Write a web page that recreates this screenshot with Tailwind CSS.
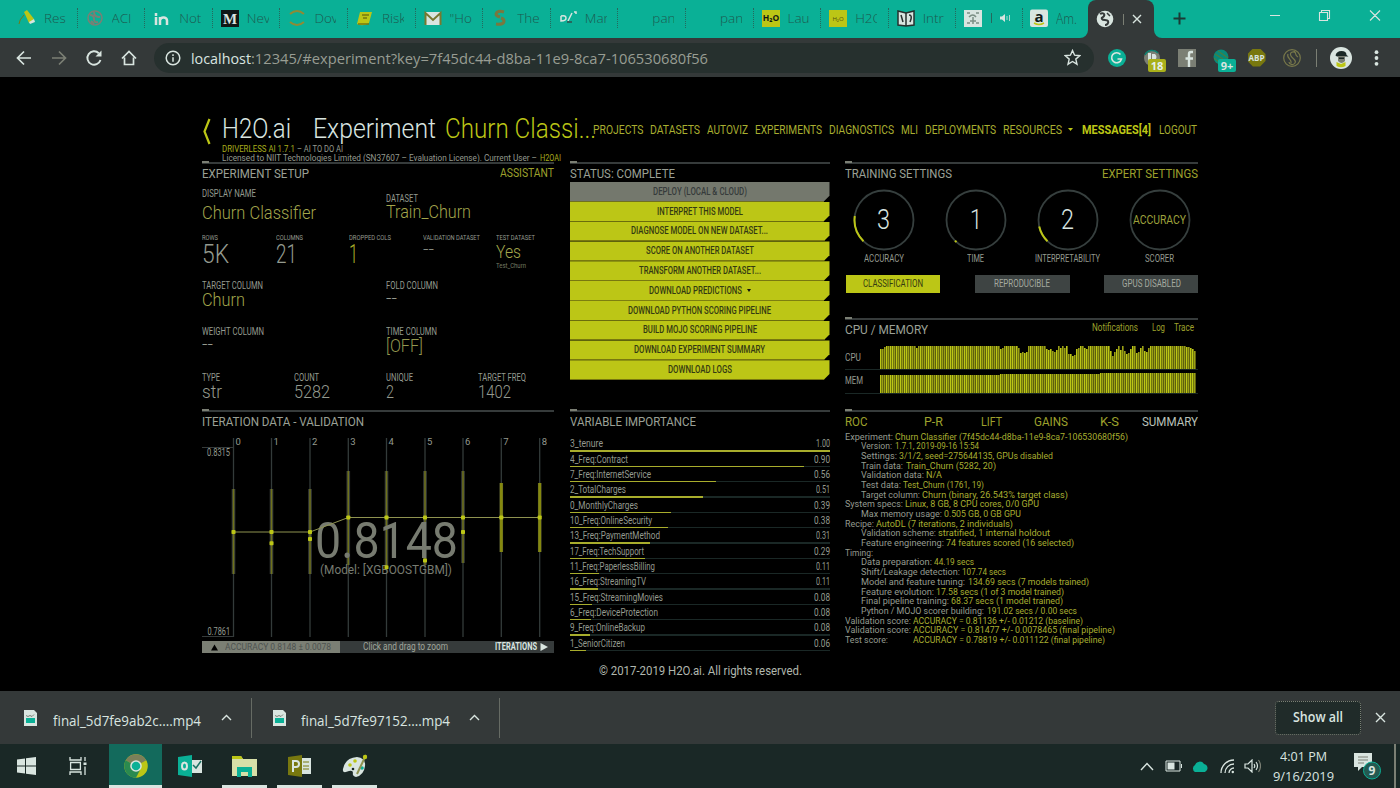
<!DOCTYPE html>
<html lang="en">
<head>
<meta charset="utf-8">
<title>H2O.ai Driverless AI</title>
<script src="https://cdn.jsdelivr.net/npm/@tailwindcss/browser@4"></script>
</head>
<body class="w-[1400px] h-[788px] overflow-hidden bg-black font-['Roboto',sans-serif] text-[#949a8f] flex flex-col">

<!-- tab strip -->
<header class="h-[38px] shrink-0 bg-[#0ab096] flex items-start font-['Open_Sans',sans-serif] text-[14px] text-[#26685d]">
  <div id="tabs" class="flex h-[36px] items-center pl-[10px] shrink-0"></div>
  <div class="relative w-[66px] ml-[9px] h-[38px] shrink-0 bg-[#343939] rounded-t-[8px] flex items-center pl-[8px]">
    <svg class="absolute -left-[8px] bottom-0" width="8" height="8"><path d="M8 0V8H0A8 8 0 0 0 8 0Z" fill="#343939"/></svg>
    <svg class="absolute -right-[8px] bottom-0" width="8" height="8"><path d="M0 0V8H8A8 8 0 0 1 0 0Z" fill="#343939"/></svg>
    <svg width="18" height="18" viewBox="0 0 18 18"><circle cx="9" cy="9" r="8.3" fill="#d9e5e0"/><path d="M4 4c3-2 5 0 4 2s-3 1-2 3 5 0 6 2-1 4-3 4" fill="none" stroke="#343939" stroke-width="2"/><path d="M11 3l3 3" stroke="#343939" stroke-width="1.5"/></svg>
    <i class="w-px h-[11px] bg-[#7b7f74] ml-[9px]"></i>
    <svg class="ml-[8px]" width="10" height="10" viewBox="0 0 10 10"><path d="M1 1l8 8M9 1l-8 8" stroke="#d9e5e0" stroke-width="1.4"/></svg>
  </div>
  <svg class="ml-[19px] mt-[12px] shrink-0" width="13" height="13" viewBox="0 0 13 13"><path d="M6.500 0.500v12M0.500 6.500h12" stroke="#1a3a35" stroke-width="2"/></svg>
  <svg class="ml-auto mr-[19px] mt-[9px] shrink-0" width="112" height="14" viewBox="0 0 112 14" fill="none" stroke="#d9e5e0" stroke-width="1.1"><path d="M1 6.500h10M50.500 3.500h8v8h-8zM52.500 3v-1.500h8v8H59M101 1.500l10 10M111 1.500l-10 10"/></svg>
</header>

<!-- address bar -->
<div class="h-[39px] shrink-0 bg-[#343939] flex items-center pl-[6px] font-['Open_Sans',sans-serif]">
  <div class="flex w-[140px] shrink-0">
    <div class="w-[35px] flex justify-center"><svg width="18" height="18" viewBox="0 0 18 18" fill="none" stroke="#d9e5e0" stroke-width="1.7"><path d="M16 9H3M9 2.500L2.500 9l6.500 6.500"/></svg></div>
    <div class="w-[35px] flex justify-center"><svg width="18" height="18" viewBox="0 0 18 18" fill="none" stroke="#7b7f74" stroke-width="1.7"><path d="M2 9h13M9 2.500L15.500 9 9 15.500"/></svg></div>
    <div class="w-[35px] flex justify-center"><svg width="18" height="18" viewBox="0 0 18 18" fill="none" stroke="#d9e5e0" stroke-width="1.9"><path d="M15.500 11A6.700 6.700 0 1 1 13.800 4.200"/><path d="M16.500 1.500v6h-6z" fill="#d9e5e0" stroke="none"/></svg></div>
    <div class="w-[35px] flex justify-center"><svg width="18" height="18" viewBox="0 0 18 18" fill="none" stroke="#d9e5e0" stroke-width="1.7"><path d="M2 9.500L9 2.500l7 7M4.500 8.500v7h9v-7"/></svg></div>
  </div>
  <div class="ml-[8px] w-[940px] h-[30px] rounded-full bg-[#26302e] flex items-center pl-[11px] pr-[13px] shrink-0">
    <svg width="16" height="16" viewBox="0 0 16 16" fill="none" stroke="#d9e5e0" stroke-width="1.5"><circle cx="8" cy="8" r="6.800"/><path d="M8 7.200v4.500M8 4.200v1.700"/></svg>
    <div class="ml-[10px] text-[15px] leading-[20px] whitespace-nowrap"><span data-w="60" class="text-[#d9e5e0]">localhost</span><span data-w="457" class="text-[#989d93]">:12345/#experiment?key=7f45dc44-d8ba-11e9-8ca7-106530680f56</span></div>
    <svg class="ml-auto" width="17" height="17" viewBox="0 0 17 17" fill="none" stroke="#d9e5e0" stroke-width="1.4"><path d="M8.500 1.500l2.100 4.700 5.100.5-3.900 3.400 1.200 5.100-4.500-2.700-4.500 2.700 1.200-5.100L1.300 6.700l5.100-.5z"/></svg>
  </div>
  <div class="ml-[5px] flex items-center">
    <div class="w-[35px] flex justify-center"><svg width="18" height="18" viewBox="0 0 18 18"><circle cx="9" cy="9" r="9" fill="#0ab096"/><path d="M12.500 5.500A5 5 0 1 0 13.500 10H9.500" fill="none" stroke="#d9e5e0" stroke-width="1.600"/></svg></div>
    <div class="w-[35px] flex justify-center relative"><svg width="18" height="18" viewBox="0 0 18 18"><circle cx="9" cy="9" r="8" fill="#7b7f74"/><path d="M2 6A8 8 0 0 1 15 4" stroke="#0a8070" fill="none" stroke-width="1.500"/><path d="M5 4h3v9H5zM9 5h3q3 3 0 6H9z" fill="#d9e5e0"/></svg>
      <b class="absolute left-[14px] top-[10px] w-[18px] h-[13px] bg-[#a9b01a] rounded-[2px] text-[#e6efea] text-[11px] leading-[13px] text-center">18</b></div>
    <div class="w-[35px] flex justify-center"><svg width="18" height="18" viewBox="0 0 18 18"><path d="M0 0h18v18H0z" fill="#7b7f74"/><path d="M15 3h-2q-2 0-2 2v13M7.500 9.500H15" fill="none" stroke="#d9e5e0" stroke-width="2.400"/></svg></div>
    <div class="w-[35px] flex justify-center relative"><svg width="18" height="18" viewBox="0 0 18 18"><circle cx="8" cy="8" r="7.500" fill="#0a8a78"/><path d="M2 5l11 7M5 2l10 7M1 9l6 5" stroke="#5f7a2c"/></svg>
      <b class="absolute left-[14px] top-[10px] w-[18px] h-[13px] bg-[#0ab096] rounded-[2px] text-[#d9e5e0] text-[11px] leading-[13px] text-center">9+</b></div>
    <div class="w-[35px] flex justify-center"><b class="size-[18px] bg-[#78780f] text-[#d9e5e0] text-[8px] leading-[18px] text-center [clip-path:polygon(30%_0,70%_0,100%_30%,100%_70%,70%_100%,30%_100%,0_70%,0_30%)]">ABP</b></div>
    <div class="w-[35px] flex justify-center"><svg width="18" height="18" viewBox="0 0 18 18" fill="none" stroke="#78784a" stroke-width="1.200"><circle cx="9" cy="9" r="8.300"/><path d="M13 4C10 1.500 6 3.500 8 7s6 4 4 7-6 1-6-1M5 5c-2 4 4 5 3 9M11 2c3 2 0 4 4 6"/></svg></div>
    <i class="w-px h-[18px] bg-[#7b7f74] ml-[7px]"></i>
    <svg class="ml-[13px]" width="22" height="22" viewBox="0 0 22 22"><circle cx="11" cy="11" r="11" fill="#d9e5e0"/><path d="M5.500 8.500q1-4.500 6-4.500t5 4l2 1.500H7z" fill="#1a2826"/><path d="M8 9h7v5q-3.500 4-7 0z" fill="#7b7f74"/><path d="M6.500 15l4.500 2 4.500-2v4q-4.500 2.500-9 0z" fill="#bcc616"/><path d="M9 10.500h5v1.500H9z" fill="#1a2826"/></svg>
    <svg class="ml-[22px]" width="5" height="16" viewBox="0 0 5 16" fill="#d9e5e0"><circle cx="2.500" cy="2.200" r="1.900"/><circle cx="2.500" cy="8" r="1.900"/><circle cx="2.500" cy="13.800" r="1.900"/></svg>
  </div>
</div>

<!-- application -->
<main class="h-[614px] shrink-0 bg-black pl-[202px] pr-[202px] flex flex-col">
  <div class="h-[85px] shrink-0 flex items-start">
    <svg class="mt-[41px] shrink-0" width="9" height="27" viewBox="0 0 9 27" fill="none" stroke="#bcc616" stroke-width="2.200"><path d="M7.500 1L2.500 13.500l5 12.500"/></svg>
    <div class="ml-[10.500px] mt-[37px] w-[371px] shrink-0">
      <div class="h-[30px] leading-[30px] text-[27px] font-light text-[#d9e5e0] whitespace-nowrap flex"><span data-w="69">H2O.ai</span><span data-w="123" class="ml-[22px]">Experiment</span><span data-w="151" class="ml-[9px] text-[#bcc616]">Churn Classi...</span></div>
      <div class="h-[9px] leading-[9px] text-[9.500px] whitespace-nowrap flex"><span data-w="73" class="text-[#a8ad1c]">DRIVERLESS AI 1.7.1</span><span data-w="46" class="ml-[2px]">– AI TO DO AI</span></div>
      <div class="h-[9px] leading-[9px] text-[9.500px] whitespace-nowrap flex"><span data-w="315">Licensed to NIIT Technologies Limited (SN37607 – Evaluation License). Current User –</span><span data-w="21" class="ml-[3px] text-[#a8ad1c]">H2OAI</span></div>
    </div>
    <nav class="mt-[44px] h-[18px] leading-[18px] text-[12px] text-[#a8ae30] flex gap-[7px] whitespace-nowrap">
      <span data-w="50.500">PROJECTS</span><span data-w="50">DATASETS</span><span data-w="41">AUTOVIZ</span><span data-w="67">EXPERIMENTS</span><span data-w="65">DIAGNOSTICS</span><span data-w="17">MLI</span><span data-w="71">DEPLOYMENTS</span><span data-w="59">RESOURCES</span><svg class="mt-[7px] -ml-[1px]" width="5" height="3"><path d="M0 0h5L2.500 3z" fill="#bcc616"/></svg><b data-w="69" class="ml-[2px] text-[#bcc616]">MESSAGES[4]</b><span data-w="38" class="ml-[1px]">LOGOUT</span>
    </nav>
  </div>

  <div class="flex gap-[15.500px] h-[499px] shrink-0">
    <!-- left column -->
    <section class="w-[352px] shrink-0 flex flex-col whitespace-nowrap">
      <div class="h-[2px] shrink-0 bg-[#363b3b] relative"><i class="absolute left-0 -top-[1px] w-[7px] h-[2px] bg-[#7b7f74]"></i></div>
      <div class="h-[20px] shrink-0 leading-[19px] text-[13.500px] flex justify-between text-[#9ba096]"><span data-w="107">EXPERIMENT SETUP</span><span data-w="54" class="text-[12px] text-[#9da02c]">ASSISTANT</span></div>
      <div class="h-[50px] shrink-0 flex">
        <div class="w-[184px] pt-[5px]"><div class="h-[10px] leading-[10px] text-[10px]"><span data-w="54">DISPLAY NAME</span></div><div class="h-[28px] leading-[28px] text-[17.500px] font-light text-[#a3a64c]"><span data-w="114">Churn Classifier</span></div></div>
        <div class="pt-[10px]"><div class="h-[10px] leading-[10px] text-[10px]"><span data-w="32">DATASET</span></div><div class="h-[17px] leading-[17px] text-[17.500px] font-light text-[#a3a64c]"><span data-w="85">Train_Churn</span></div></div>
      </div>
      <div class="h-[46px] shrink-0 grid grid-cols-[73.600px_73.600px_73.600px_73.600px_1fr] text-[25px] font-light leading-[24px]">
        <div><div class="h-[9px] leading-[9px] text-[7px] font-normal"><span data-w="16">ROWS</span></div><div class="h-[24px]"><span data-w="27">5K</span></div></div>
        <div><div class="h-[9px] leading-[9px] text-[7px] font-normal"><span data-w="27">COLUMNS</span></div><div class="h-[24px]"><span data-w="21">21</span></div></div>
        <div><div class="h-[9px] leading-[9px] text-[7px] font-normal"><span data-w="42">DROPPED COLS</span></div><div class="h-[24px]"><span data-w="9" class="text-[#a8ad28]">1</span></div></div>
        <div><div class="h-[9px] leading-[9px] text-[7px] font-normal"><span data-w="57">VALIDATION DATASET</span></div><div class="h-[14px] leading-[14px] text-[16px]"><span data-w="11">--</span></div></div>
        <div><div class="h-[9px] leading-[9px] text-[7px] font-normal"><span data-w="39">TEST DATASET</span></div><div class="h-[18px] leading-[18px] text-[18px] text-[#a3a64c]"><span data-w="25">Yes</span></div><div class="h-[11px] leading-[11px] text-[7px] font-normal text-[#757a62]"><span data-w="30">Test_Churn</span></div></div>
      </div>
      <div class="h-[46px] shrink-0 grid grid-cols-[184px_1fr] text-[17.500px] font-light leading-[19px] pt-[1px]">
        <div><div class="h-[10px] leading-[10px] text-[10px] font-normal"><span data-w="61">TARGET COLUMN</span></div><span data-w="43" class="text-[#a3a64c]">Churn</span></div>
        <div><div class="h-[10px] leading-[10px] text-[10px] font-normal"><span data-w="52">FOLD COLUMN</span></div><div class="h-[15px] leading-[15px]"><span data-w="11">--</span></div></div>
      </div>
      <div class="h-[46px] shrink-0 grid grid-cols-[184px_1fr] text-[17.500px] font-light leading-[19px] pt-[1px]">
        <div><div class="h-[10px] leading-[10px] text-[10px] font-normal"><span data-w="62">WEIGHT COLUMN</span></div><div class="h-[15px] leading-[15px]"><span data-w="11">--</span></div></div>
        <div><div class="h-[10px] leading-[10px] text-[10px] font-normal"><span data-w="51">TIME COLUMN</span></div><span data-w="37" class="text-[#93974f]">[OFF]</span></div>
      </div>
      <div class="h-[38px] shrink-0 grid grid-cols-[92px_92px_92px_1fr] text-[17.500px] font-light leading-[19px] pt-[1px]">
        <div><div class="h-[10px] leading-[10px] text-[10px] font-normal"><span data-w="18">TYPE</span></div><span data-w="20">str</span></div>
        <div><div class="h-[10px] leading-[10px] text-[10px] font-normal"><span data-w="25">COUNT</span></div><span data-w="36">5282</span></div>
        <div><div class="h-[10px] leading-[10px] text-[10px] font-normal"><span data-w="27">UNIQUE</span></div><span data-w="8">2</span></div>
        <div><div class="h-[10px] leading-[10px] text-[10px] font-normal"><span data-w="48">TARGET FREQ</span></div><span data-w="33">1402</span></div>
      </div>
      <div class="h-[2px] shrink-0 bg-[#363b3b] relative"><i class="absolute left-0 -top-[1px] w-[7px] h-[2px] bg-[#7b7f74]"></i></div>
      <div class="h-[19px] shrink-0 leading-[19px] text-[13.500px] text-[#9ba096]"><span data-w="162">ITERATION DATA - VALIDATION</span></div>
      <svg id="chart" class="shrink-0" width="352" height="210" viewBox="202 431 352 210" fill="#949a8f" font-size="10"></svg>
      <div class="h-[12px] shrink-0 bg-[#363b3b] text-[10px] leading-[12px] flex text-[#a0a59a]">
        <div class="w-[138px] bg-[#7b7f74] text-[#4d5250] flex items-center"><svg class="ml-[9px]" width="7" height="7"><path d="M0 6.500L3.500 0.500 7 6.500z" fill="#000"/></svg><span data-w="106" class="ml-[7px] text-[9px]">ACCURACY 0.8148 ± 0.0078</span></div>
        <span data-w="85" class="ml-[23px]">Click and drag to zoom</span>
        <b data-w="42" class="ml-[47px] text-[#d9e5e0]">ITERATIONS</b>
        <svg class="ml-[3px] mt-[2px]" width="8" height="8"><path d="M0.500 0L8 4 0.500 8z" fill="#d9e5e0"/></svg>
      </div>
    </section>

    <!-- middle column -->
    <section class="w-[260px] shrink-0 flex flex-col whitespace-nowrap">
      <div class="h-[2px] shrink-0 bg-[#363b3b] relative"><i class="absolute left-0 -top-[1px] w-[7px] h-[2px] bg-[#7b7f74]"></i></div>
      <div class="h-[18px] shrink-0 leading-[19px] text-[13.500px] text-[#9ba096]"><span data-w="105">STATUS: COMPLETE</span></div>
      <div id="actions" class="h-[198px] shrink-0 grid grid-rows-10 text-[10px] font-medium text-[#343a12]"></div>
      <div class="h-[2px] mt-[30px] shrink-0 bg-[#363b3b] relative"><i class="absolute left-0 -top-[1px] w-[7px] h-[2px] bg-[#7b7f74]"></i></div>
      <div class="h-[24.500px] shrink-0 leading-[19px] text-[13.500px] text-[#9ba096]"><span data-w="126">VARIABLE IMPORTANCE</span></div>
      <div id="vars" class="shrink-0 text-[10px]"></div>
    </section>

    <!-- right column -->
    <section class="w-[353px] shrink-0 flex flex-col whitespace-nowrap">
      <div class="h-[2px] shrink-0 bg-[#363b3b] relative"><i class="absolute left-0 -top-[1px] w-[7px] h-[2px] bg-[#7b7f74]"></i></div>
      <div class="h-[20px] shrink-0 leading-[19px] text-[13.500px] flex justify-between text-[#9ba096]"><span data-w="107">TRAINING SETTINGS</span><span data-w="96" class="text-[#9da02c]">EXPERT SETTINGS</span></div>
      <div class="h-[91px] shrink-0 pt-[5px] -mx-[7.500px] grid grid-cols-4 text-[10px]">
        <div class="flex flex-col items-center"><div class="size-[62px] grid place-items-center"><svg class="col-start-1 row-start-1" width="62" height="62" viewBox="-31 -31 62 62" fill="none"><circle r="29.500" stroke="#363f3e" stroke-width="1.800"/><path d="M-20.500 21.200A29.500 29.500 0 0 1 -29.200 -4" stroke="#bcc616" stroke-width="2"/></svg><span data-w="13" class="col-start-1 row-start-1 text-[27px] font-light text-[#d9e5e0]">3</span></div><span data-w="40" class="leading-[16px]">ACCURACY</span></div>
        <div class="flex flex-col items-center"><div class="size-[62px] grid place-items-center"><svg class="col-start-1 row-start-1" width="62" height="62" viewBox="-31 -31 62 62" fill="none"><circle r="29.500" stroke="#363f3e" stroke-width="1.800"/><path d="M-19.500 22.100L-21 20.700" stroke="#bcc616" stroke-width="2"/></svg><span data-w="12" class="col-start-1 row-start-1 text-[27px] font-light text-[#d9e5e0]">1</span></div><span data-w="17" class="leading-[16px]">TIME</span></div>
        <div class="flex flex-col items-center"><div class="size-[62px] grid place-items-center"><svg class="col-start-1 row-start-1" width="62" height="62" viewBox="-31 -31 62 62" fill="none"><circle r="29.500" stroke="#363f3e" stroke-width="1.800"/><path d="M-20.500 21.200A29.500 29.500 0 0 1 -28.800 6.500" stroke="#bcc616" stroke-width="2"/></svg><span data-w="13" class="col-start-1 row-start-1 text-[27px] font-light text-[#d9e5e0]">2</span></div><span data-w="65" class="leading-[16px]">INTERPRETABILITY</span></div>
        <div class="flex flex-col items-center"><div class="size-[62px] grid place-items-center"><svg class="col-start-1 row-start-1" width="62" height="62" viewBox="-31 -31 62 62" fill="none"><circle r="29.500" stroke="#363f3e" stroke-width="1.800"/></svg><span data-w="53" class="col-start-1 row-start-1 text-[12px] text-[#9da03c]">ACCURACY</span></div><span data-w="29" class="leading-[16px]">SCORER</span></div>
      </div>
      <div class="h-[18px] shrink-0 flex justify-between text-[10px] leading-[18px] text-center">
        <div class="w-[94px] ml-[1px] bg-[#bcc616] text-[#343a12]"><span data-w="60">CLASSIFICATION</span></div>
        <div class="w-[95px] bg-[#3e4443] text-[#a4a99f]"><span data-w="56">REPRODUCIBLE</span></div>
        <div class="w-[94px] bg-[#3e4443] text-[#a4a99f]"><span data-w="59">GPUS DISABLED</span></div>
      </div>
      <div class="h-[2px] mt-[25px] shrink-0 bg-[#363b3b] relative"><i class="absolute left-0 -top-[1px] w-[7px] h-[2px] bg-[#7b7f74]"></i></div>
      <div class="h-[26px] shrink-0 leading-[19px] text-[13.500px] flex text-[#9ba096]"><span data-w="83">CPU / MEMORY</span><div class="ml-auto mr-[4px] flex text-[10px] leading-[16px] text-[#9da02c]"><span data-w="46">Notifications</span><span data-w="13" class="ml-[14px]">Log</span><span data-w="20" class="ml-[9px]">Trace</span></div></div>
      <div class="h-[24px] shrink-0 flex text-[10px] leading-[24px] border-b border-[#1a2826]"><span data-w="16">CPU</span><svg id="cpu" class="ml-auto mr-[1px]" width="317" height="23"></svg></div>
      <div class="h-[24px] shrink-0 flex text-[10px] leading-[22px] border-b border-[#1a2826]"><span data-w="18">MEM</span><svg id="mem" class="ml-auto mr-[1px] mt-[3px]" width="317" height="20"></svg></div>
      <div class="h-[2px] mt-[16px] shrink-0 bg-[#363b3b] relative"><i class="absolute left-0 -top-[1px] w-[7px] h-[2px] bg-[#7b7f74]"></i></div>
      <div class="h-[19.500px] shrink-0 leading-[19px] text-[13.500px] flex text-[#9da02c]"><span data-w="22.500">ROC</span><span data-w="19" class="ml-[56.500px]">P-R</span><span data-w="21" class="ml-[38px]">LIFT</span><span data-w="34" class="ml-[32px]">GAINS</span><span data-w="19" class="ml-[32px]">K-S</span><span data-w="56" class="ml-[22.500px] text-[#b9c1b9]">SUMMARY</span></div>
      <div id="summary" class="shrink-0 text-[9.800px]"></div>
    </section>
  </div>
  <footer class="h-[20px] leading-[20px] text-[12px] text-center text-[#b0b7ae]"><span data-w="203">© 2017-2019 H2O.ai. All rights reserved.</span></footer>
</main>

<!-- downloads shelf -->
<div class="h-[53px] shrink-0 bg-[#343939] flex items-center font-['Open_Sans',sans-serif] text-[14px] text-[#d9e5e0]">
  <div class="w-[252px] h-[40px] flex items-center border-r border-[#666b64] pl-[24px]">
    <svg width="13" height="16" viewBox="0 0 13 16"><path d="M0 0h10l3 3v13H0z" fill="#d9e5e0"/><path d="M2 8h9v5H2z" fill="#0ab096"/><path d="M2 5.500l2 1 2-1 2 1 2-2" stroke="#7b7f74" fill="none"/></svg>
    <span data-w="148" class="ml-[16px] mt-[6px]">final_5d7fe9ab2c....mp4</span>
    <svg class="ml-[20px]" width="11" height="7"><path d="M1 6l4.500-4.500L10 6" fill="none" stroke="#d9e5e0" stroke-width="1.400"/></svg>
  </div>
  <div class="w-[248px] h-[40px] flex items-center border-r border-[#666b64] pl-[21px]">
    <svg width="13" height="16" viewBox="0 0 13 16"><path d="M0 0h10l3 3v13H0z" fill="#d9e5e0"/><path d="M2 8h9v5H2z" fill="#0ab096"/><path d="M2 5.500l2 1 2-1 2 1 2-2" stroke="#7b7f74" fill="none"/></svg>
    <span data-w="149" class="ml-[15px] mt-[6px]">final_5d7fe97152....mp4</span>
    <svg class="ml-[19px]" width="11" height="7"><path d="M1 6l4.500-4.500L10 6" fill="none" stroke="#d9e5e0" stroke-width="1.400"/></svg>
  </div>
  <div class="ml-auto w-[86px] h-[34px] rounded-[4px] border border-dotted border-[#7b7f74] bg-[#202b29] text-center leading-[31px] font-semibold text-[13.500px]"><span data-w="50">Show all</span></div>
  <svg class="ml-[14px] mr-[14px]" width="11" height="11"><path d="M1 1l9 9M10 1l-9 9" stroke="#d9e5e0" stroke-width="1.400"/></svg>
</div>

<!-- taskbar -->
<div class="h-[44px] shrink-0 bg-[#1a2826] flex font-['Open_Sans',sans-serif] text-[#d9e5e0]">
  <div class="w-[52px] flex items-center justify-center"><svg width="19" height="18" viewBox="0 0 19 18" fill="#d9e5e0"><path d="M0 2.500L8 1.400v7.100H0zM9 1.200L19 0v8.500H9zM0 9.500h8v7.100L0 15.500zM9 9.500h10V18L9 16.800z"/></svg></div>
  <div class="w-[57px] flex items-center pl-[17px]"><svg width="19" height="18" viewBox="0 0 19 18" fill="none" stroke="#d9e5e0" stroke-width="1.300"><path d="M1 0v3h11V0M1 18v-3h11v3M1.600 5.500h9.800v7H1.600zM16 0v4M16 9.500V18"/><path d="M14.500 5.500h3v2.500h-3z" fill="#d9e5e0" stroke="none"/></svg></div>
  <div class="w-[53px] bg-[#136a5c] border-b-[3px] border-[#d9e5e0] flex items-center justify-center pt-[3px]"><svg width="24" height="24" viewBox="-12 -12 24 24"><circle r="11.800" fill="#bcc616"/><path d="M0 0L-10.300 -5.800A11.800 11.800 0 0 1 10.300 -5.800Z" fill="#7b7f5a"/><path d="M0 0L-10.300 -5.800A11.800 11.800 0 0 0 0 11.800L4 4z" fill="#2a8a50"/><circle r="5.800" fill="#d9e5e0"/><circle r="4.300" fill="#0ab096"/></svg></div>
  <div class="w-[55px] flex items-center justify-center"><svg width="24" height="22" viewBox="0 0 24 22"><path d="M0 2L14 0v22L0 20z" fill="#0ab096"/><path d="M14 5h10v13H14z" fill="#d9e5e0"/><path d="M15 10l3 3 5-7" fill="none" stroke="#1a7264" stroke-width="1.500"/><ellipse cx="6.500" cy="11" rx="2.500" ry="3.500" fill="none" stroke="#d9e5e0" stroke-width="2"/></svg></div>
  <div class="w-[55px] flex items-center justify-center relative"><svg width="25" height="22" viewBox="0 0 25 22"><path d="M0 1h9l2 3h14v17H0z" fill="#d7dfa8"/><path d="M0 1h9l2 3H0z" fill="#bcc616"/><path d="M5 22V12h15v10h-4v-5H9v5z" fill="#0ab096"/></svg><i class="absolute bottom-0 left-[5px] w-[45px] h-[3px] bg-[#d9e5e0]"></i></div>
  <div class="w-[55px] flex items-center justify-center relative"><svg width="24" height="22" viewBox="0 0 24 22"><path d="M12 3h11v16H12z" fill="#d9e5e0"/><path d="M15 7h6M15 11h6M15 14h6" stroke="#78780f"/><path d="M0 2L14 0v22L0 20z" fill="#78780f"/><path d="M5 17V6h3q3 0 3 3t-3 3H5" fill="none" stroke="#d9e5e0" stroke-width="2"/></svg><i class="absolute bottom-0 left-[5px] w-[45px] h-[3px] bg-[#d9e5e0]"></i></div>
  <div class="w-[55px] flex items-center justify-center relative"><svg width="26" height="24" viewBox="0 0 26 24"><path d="M1 15Q3 4 15 3q9 1 8 9-1 9-9 11-4-1-3-4 0-3-4-2-7 3-6-2z" fill="#d9e5e0"/><circle cx="8" cy="11" r="1.800" fill="#bcc616"/><circle cx="13" cy="7" r="1.800" fill="#bcc616"/><circle cx="20" cy="14" r="1.800" fill="#0ab096"/><circle cx="11" cy="15" r="1.300" fill="#1a2826"/><path d="M24 1L15 20" stroke="#8f9350" stroke-width="2"/><circle cx="23" cy="3" r="2.200" fill="#bcc616"/></svg><i class="absolute bottom-0 left-[5px] w-[45px] h-[3px] bg-[#d9e5e0]"></i></div>
  <div class="ml-auto flex items-center">
    <svg width="14" height="9"><path d="M1 8l6-6.500L13 8" fill="none" stroke="#d9e5e0" stroke-width="1.400"/></svg>
    <svg class="ml-[11px]" width="18" height="12" fill="none" stroke="#d9e5e0"><path d="M1 1h14v10H1zM16.500 4v4"/><path d="M2.500 2.500h7v7h-7z" fill="#d9e5e0" stroke="none"/></svg>
    <svg class="ml-[8px]" width="18" height="12"><path d="M4 12a4 4 0 0 1 0-7 5 5 0 0 1 9-1 4.200 4.200 0 0 1 1 8z" fill="#0ab096"/></svg>
    <svg class="ml-[11px]" width="15" height="15" fill="none" stroke="#d9e5e0" stroke-width="1.300"><path d="M1 14A13 13 0 0 1 14 1M5 14a9 9 0 0 1 9-9M9 14a5 5 0 0 1 5-5"/><circle cx="12.800" cy="13" r="1.200" fill="#d9e5e0" stroke="none"/></svg>
    <svg class="ml-[9px]" width="17" height="14" fill="none" stroke="#d9e5e0" stroke-width="1.200"><path d="M1 5h3l4-4v12L4 9H1zM10 5q1.500 2 0 4M12 3q3 4 0 8"/><path d="M14.500 1q4 6 0 12" stroke="#7b7f74"/></svg>
    <div class="ml-[11px] w-[62px] text-center text-[13.500px] leading-[20px]"><div><span data-w="47">4:01 PM</span></div><div><span data-w="61">9/16/2019</span></div></div>
    <svg class="ml-[20px]" width="28" height="28" viewBox="0 0 28 28"><path d="M0 1h18v14H8l-4 4v-4H0z" fill="#d9e5e0"/><path d="M4 5h10M4 8h10M4 11h6" stroke="#7b7f74"/><circle cx="18" cy="18.500" r="8.500" fill="#245a52" stroke="#0ab096"/><text x="18" y="23" font-size="12" font-weight="bold" text-anchor="middle" fill="#d9e5e0">9</text></svg>
    <i class="ml-[12px] w-[2px] h-[44px] bg-[#7b7f74] mr-[4px]"></i>
  </div>
</div>

<script>
const $ = id => document.getElementById(id);

// browser tabs: [icon markup, title]
const tabs = [
 ['<path d="M6 3l3-2 7 9-5 4z" fill="#bcc616"/><path d="M11 13l5-3 1 3-5 2z" fill="#d9e5e0"/><path d="M1 15q0-4 5-9" stroke="#78780f" fill="none"/>','Res'],
 ['<circle cx="9" cy="9" r="7" fill="none" stroke="#7b7f74" stroke-width="1.5"/><path d="M4 6q4 0 4 4t4 3M8 3q0 5 6 5M5 12l3 3" stroke="#7b7f74" stroke-width="2" fill="none"/>','ACI'],
 ['<path d="M3 4v3M3 8v8M7 8v8M7 11q1-3 4-2.500t3 3V16" stroke="#d9e5e0" stroke-width="2.500" fill="none"/>','Not'],
 ['<path d="M0 1h18v17H0z" fill="#101817"/><text x="9" y="14.500" text-anchor="middle" font-family="Liberation Serif" font-weight="bold" font-size="15" fill="#d9e5e0">M</text>','Nev'],
 ['<path d="M2 5q7-6 14 0M2 13q7 6 14 0" stroke="#8f8a35" stroke-width="2" fill="none"/>','Dov'],
 ['<path d="M4 3h12l-3 11q-6 4-12 1z" fill="#bcc616"/><path d="M6 6h7M7 9h4M2 15h11" stroke="#78780f" stroke-width="1.500"/>','Risk'],
 ['<path d="M1 3h16v13H1z" fill="#d9e5e0"/><path d="M1.500 16V4L9 11l7.500-7v12" stroke="#78782f" stroke-width="2" fill="none"/>','"Ho'],
 ['<path d="M13 3q-7-2-8 2 0 2 4 3M5 15q8 1 8-3 0-2-3-3" stroke="#78783f" stroke-width="3" fill="none"/>','The'],
 ['<path d="M2 7v5q5 0 5-3T2 7M9 12l4-8M15 3h2v2" stroke="#d9e5e0" stroke-width="1.500" fill="none"/><path d="M8 13h5" stroke="#26685d" stroke-width="2"/>','Mar'],
 ['','pan'],['','pan'],
 ['<path d="M0 1h18v17H0z" fill="#bcc616"/><text x="9" y="12" text-anchor="middle" font-weight="bold" font-size="8.500" fill="#101817">H₂O</text>','Lau'],
 ['<path d="M0 1h18v17H0z" fill="#bcc616"/><text x="9" y="12" text-anchor="middle" font-size="6" fill="#4d520f">H₂O</text>','H2O'],
 ['<path d="M1 2l8 2 8-2v14l-8 1-8-1z" fill="#d9e5e0" stroke="#26302e" stroke-width="1.500"/><path d="M9 4v13M4 6l2 7M12 6q4 0 1 7" stroke="#26302e" stroke-width="1.500" fill="none"/>','Intr'],
];
$('tabs').innerHTML = tabs.map(([i,t]) =>
  `<div class="w-[67.600px] h-[20px] shrink-0 flex items-center pl-[8px] gap-[8px] border-r border-dotted border-[#26685d]"><svg class="shrink-0" width="18" height="18" viewBox="0 0 18 18">${i}</svg><span class="w-[22px] overflow-hidden whitespace-nowrap shrink-0 leading-[20px] font-light text-[13.500px] text-[#1d5a50]">${t}</span></div>`).join('') +
  `<div class="w-[36px] h-[10px] shrink-0 flex items-center pl-[8px] border-r border-[#26685d]"><svg class="shrink-0" width="18" height="18"><path d="M0 1h18v17H0z" fill="#d9e5e0"/><path d="M3 4h3M12 4h3M3 14h3M12 14h3M5 8q4-4 7 0M9 8v7M6 12l6 0" stroke="#7b8f84" stroke-width="1.500" fill="none"/></svg></div>
   <div class="w-[31px] h-[20px] shrink-0 flex items-center pl-[8px] border-r border-dotted border-[#26685d]"><svg width="11" height="8"><path d="M0 2.500h2L5 0v8L2 5.500H0z" fill="#d9e5e0"/><path d="M7 2v4M9.500 1v6" stroke="#a9d9d0"/></svg></div>
   <div class="w-[56px] h-[20px] shrink-0 flex items-center pl-[7px] gap-[8px]"><svg class="shrink-0" width="18" height="18"><rect y="0.500" width="18" height="17.500" rx="2" fill="#d9e5e0"/><text x="9" y="12.500" text-anchor="middle" font-size="15" font-weight="bold" fill="#101817">a</text><path d="M4 14q5 3 10 0" stroke="#bcc616" stroke-width="1.500" fill="none"/></svg><span data-w="21" class="font-light text-[#1d5a50]">Am.</span></div>`;

// action buttons: [label, width]
const actions = [['DEPLOY (LOCAL &amp; CLOUD)',94],['INTERPRET THIS MODEL',86],['DIAGNOSE MODEL ON NEW DATASET...',137],['SCORE ON ANOTHER DATASET',108],['TRANSFORM ANOTHER DATASET...',122],['DOWNLOAD PREDICTIONS',93],['DOWNLOAD PYTHON SCORING PIPELINE',143],['BUILD MOJO SCORING PIPELINE',114],['DOWNLOAD EXPERIMENT SUMMARY',131],['DOWNLOAD LOGS',64]];
$('actions').innerHTML = actions.map(([t,w],i) =>
  `<div class="${i ? 'bg-[#bcc616]' : 'bg-[#74786d] text-[#363b3b]'} border-b border-[#78780f] flex items-center justify-center [clip-path:polygon(0_0,100%_0,100%_calc(100%-6px),calc(100%-6px)_100%,0_100%)]"><span data-w="${w}">${t}</span>${i===5?'<svg class="ml-[5px]" width="4" height="3"><path d="M0 0h4L2 3z" fill="#111"/></svg>':''}</div>`).join('');

// variable importance: [name, name width, value, bar length]
const vars = [['3_tenure',33,'1.00',260],['4_Freq:Contract',58,'0.90',234],['7_Freq:InternetService',81,'0.56',146],['2_TotalCharges',56,'0.51',133],['0_MonthlyCharges',68,'0.39',101],['10_Freq:OnlineSecurity',82,'0.38',98],['13_Freq:PaymentMethod',90,'0.31',80],['17_Freq:TechSupport',74,'0.29',75],['11_Freq:PaperlessBilling',85,'0.11',29],['16_Freq:StreamingTV',76,'0.11',28],['15_Freq:StreamingMovies',93,'0.08',22],['6_Freq:DeviceProtection',88,'0.08',21],['9_Freq:OnlineBackup',75,'0.08',20],['1_SeniorCitizen',55,'0.06',16]];
$('vars').innerHTML = vars.map(([n,w,v,b]) =>
  `<div class="h-[15.330px] flex flex-col justify-end"><div class="flex justify-between leading-[13px] h-[13px]"><span data-w="${w}">${n}</span><span data-w="${v.includes('1')?14:16}">${v}</span></div><div class="h-[1.500px] bg-[#1a2826]"><div class="h-[1.500px] bg-[#a8ad2c]" style="width:${b}px"></div></div></div>`).join('');

// run summary: [indent, label, label width, gap, value, value width]
const S = [[0,'Experiment:',48,2,'Churn Classifier (7f45dc44-d8ba-11e9-8ca7-106530680f56)',233],
[1,'Version:',31,3,'1.7.1, 2019-09-16 15:54',84],[1,'Settings:',36,2,'3/1/2, seed=275644135, GPUs disabled',154],
[1,'Train data:',42,3,'Train_Churn (5282, 20)',90],[1,'Validation data:',63,2,'N/A',16],[1,'Test data:',40,2,'Test_Churn (1761, 19)',81],
[1,'Target column:',59,2,'Churn (binary, 26.543% target class)',146],[0,'System specs:',58,2,'Linux, 8 GB, 8 CPU cores, 0/0 GPU',134],
[1,'Max memory usage:',81,2,'0.505 GB, 0 GB GPU',77],[0,'Recipe:',29,2,'AutoDL (7 iterations, 2 individuals)',137],
[1,'Validation scheme:',75,2,'stratified, 1 internal holdout',112],[1,'Feature engineering:',83,2,'74 features scored (16 selected)',128],
[0,'Timing:',28,0,'',0],[1,'Data preparation:',71,2,'44.19 secs',40],[1,'Shift/Leakage detection:',99,2,'107.74 secs',44],
[1,'Model and feature tuning:',104,3,'134.69 secs (7 models trained)',121],[1,'Feature evolution:',73,2,'17.58 secs (1 of 3 model trained)',128],
[1,'Final pipeline training:',88,2,'68.37 secs (1 model trained)',112],[1,'Python / MOJO scorer building:',123,3,'191.02 secs / 0.00 secs',90],
[0,'Validation score:',66,2,'ACCURACY = 0.81136 +/- 0.01212 (baseline)',170],[0,'Validation score:',66,2,'ACCURACY = 0.81477 +/- 0.0078465 (final pipeline)',202],
[0,'Test score:',43,25,'ACCURACY = 0.78819 +/- 0.011122 (final pipeline)',192]];
$('summary').innerHTML = S.map(([i,l,lw,g,v,vw]) =>
  `<div class="h-[9.690px] leading-[9.690px] flex ${i?'pl-[16px]':''}"><span data-w="${lw}">${l}</span>${v?`<span class="text-[#a8ae30]" style="margin-left:${g}px" data-w="${vw}">${v}</span>`:''}</div>`).join('');

// CPU and memory history
const dips = {0:3,1:3,2:1,18:2,60:3,61:2,69:2,70:7,71:6,72:7,73:6,83:3,84:4,85:3,86:5,87:6,88:4,90:2,92:2,94:8,95:8,96:10,97:9,98:3,99:2,102:2,103:3,115:5,116:10,117:6,118:3,120:4,122:5,123:8,124:7,125:3,128:7,129:6,130:2,132:5,133:6,134:2,153:1,154:1,155:2,156:3,157:5};
const shade = i => (i*7%5<2||i%6===0) ? '#bcc616' : '#9a9f14';
const bars = (h, top) => Array.from({length:158},(_,i)=>`<rect x="${i*2}" y="${top(i)}" width="1.600" height="${h-top(i)}" fill="${shade(i)}"/>`).join('');
$('cpu').innerHTML = bars(23, i => dips[i]||0);
$('mem').innerHTML = bars(20, i => i<60?2:i<110?1:0);

// iteration chart
const xs = [233.5,271.5,310,348.3,386.5,425,463,501.3,539.7];
const range = [[489,574],[489,574],[489,574],[471,565],[471,565],[471,565],[471,563],[483,552],[483,552]];
const ys = [532,532,532,517.5,517.5,517.5,517.5,517.5,517.5];
let c = '<path d="M202 447.500h31M202 636.500h31" stroke="#363b3b"/>';
xs.forEach((x,i) => {
  c += `<path d="M${x} 438V637" stroke="#333b3a" stroke-width="1.300"/><text x="${x+2}" y="445.300" font-size="9.500">${i}</text>`;
  c += `<path d="M${x} ${range[i][0]}V${range[i][1]}" stroke="#363b3b" stroke-width="3.600"/><path d="M${x} ${range[i][0]}V${range[i][1]}" stroke="${i>6?'#85880f':'#6f721a'}" stroke-width="${i>6?3:1.500}"/>`;
});
c += '<text x="207" y="455.500" textLength="23" lengthAdjust="spacingAndGlyphs">0.8315</text><text x="207.500" y="635" textLength="22.500" lengthAdjust="spacingAndGlyphs">0.7861</text>';
c += '<text x="315" y="558" font-size="50.500" textLength="143" lengthAdjust="spacingAndGlyphs" fill="#777b70">0.8148</text><text x="320" y="574" font-size="12.500" textLength="132" lengthAdjust="spacingAndGlyphs" fill="#777b70">(Model: [XGBOOSTGBM])</text>';
c += `<polyline points="${xs.map((x,i)=>x+','+ys[i]).join(' ')}" fill="none" stroke="#8f9350"/>`;
const pts = xs.map((x,i)=>[x,ys[i]]).concat([[271.5,543.3],[310,539],[463,532],[425,560.5],[386.5,567.3]]);
c += pts.map(([x,y])=>`<rect x="${x-2}" y="${y-2}" width="4" height="4" rx=".800" fill="#bcc616"/>`).join('');
$('chart').innerHTML = c;

const fit = (e, n) => {
  const w = +e.dataset.w;
  if (!n) return;
  e.style.transform = `scaleX(${w/n})`;
  e.style.marginRight = `${w-n}px`;
};
const watcher = new ResizeObserver(list => list.forEach(r => fit(r.target, r.borderBoxSize[0].inlineSize)));
document.querySelectorAll('[data-w]').forEach(e => {
  Object.assign(e.style, { display: 'inline-block', whiteSpace: 'nowrap', flexShrink: 0, transformOrigin: '0 50%' });
  watcher.observe(e);
});
</script>
</body>
</html>
